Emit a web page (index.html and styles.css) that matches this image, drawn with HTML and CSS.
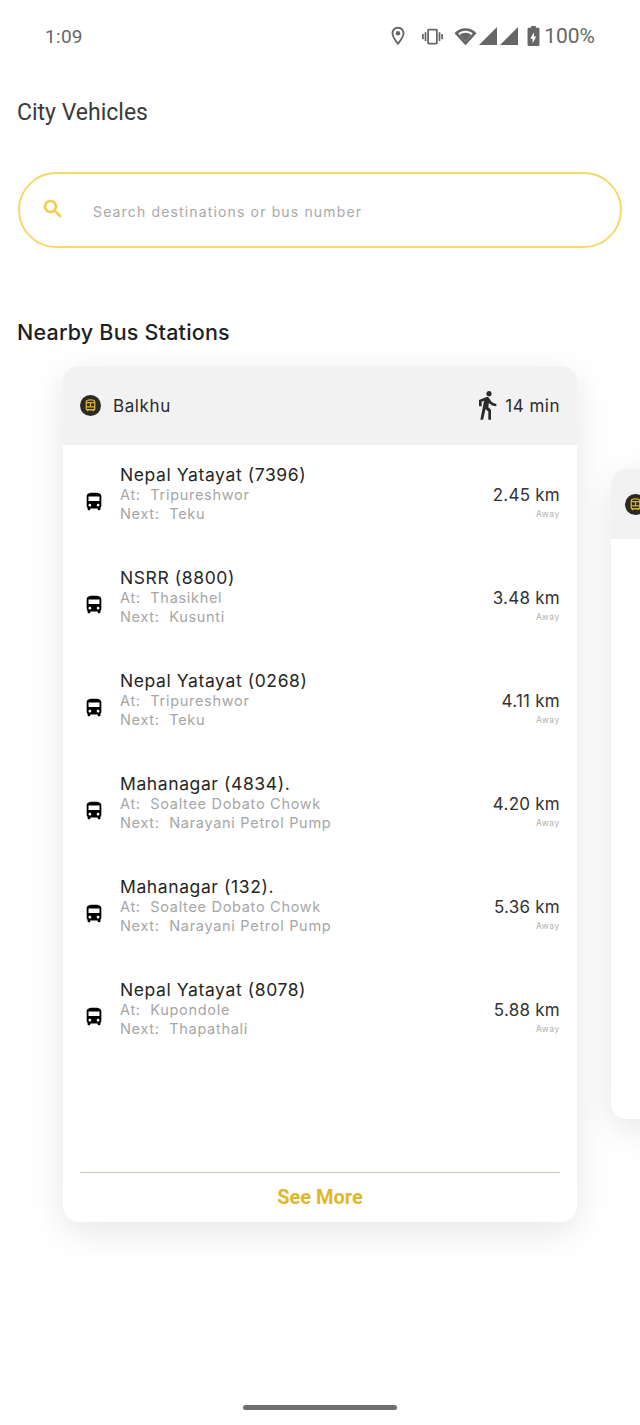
FILE: index.html
```html
<!DOCTYPE html>
<html lang="en">
<head>
<meta charset="utf-8">
<title>City Vehicles</title>
<link rel="stylesheet" href="styles.css">
</head>
<body>
<div class="page">
  <header class="status">
    <span class="time">1:09</span>
    <div class="status-icons">
      <svg class="si pin" viewBox="0 0 24 24"><path d="M12 2C8.100 2 5 5.100 5 9c0 5.200 7 13 7 13s7-7.800 7-13c0-3.900-3.100-7-7-7zm0 2c2.800 0 5 2.200 5 5 0 2.900-2.900 7.200-5 9.900C9.900 16.200 7 11.900 7 9c0-2.800 2.200-5 5-5z"/><circle cx="12" cy="9" r="2.500"/></svg>
      <svg class="si vib" viewBox="0 0 24 24"><path d="M0 15h2V9H0v6zm3 2h2V7H3v10zm19-8v6h2V9h-2zm-3 8h2V7h-2v10zM16.500 3h-9C6.700 3 6 3.700 6 4.500v15c0 .8.700 1.500 1.500 1.500h9c.8 0 1.500-.7 1.500-1.500v-15c0-.8-.7-1.500-1.500-1.500zM16 19H8V5h8v14z"/></svg>
      <svg class="si wifi" viewBox="0 0 24 24"><path fill-rule="evenodd" d="M12 21 .5 8.500C3.500 5.500 7.500 3.500 12 3.500s8.500 2 11.500 5L12 21zM12 17l7.500-8.200C17.500 7 15 6 12 6S6.500 7 4.500 8.800L12 17z"/><path d="M12 17 6 10.500C7.500 9 9.600 8.200 12 8.200s4.500.8 6 2.300L12 17z"/></svg>
      <svg class="si sig" viewBox="0 0 20 20"><path d="M1 19 19 1v18z"/></svg>
      <svg class="si sig" viewBox="0 0 20 20"><path d="M1 19 19 1v18z"/></svg>
      <svg class="si batt" viewBox="0 0 14 24"><path fill-rule="evenodd" d="M4.500 1h5v2H12c.8 0 1.500.7 1.500 1.500v17c0 .8-.7 1.500-1.500 1.500H2c-.8 0-1.500-.7-1.500-1.500v-17C.5 3.700 1.200 3 2 3h2.500V1zM6 20l4-7.500H7.500V8L3.500 15H6v5z"/></svg>
      <span class="pct">100%</span>
    </div>
  </header>

  <h1 class="title">City Vehicles</h1>

  <div class="search">
    <svg class="search-icon" viewBox="0 0 24 24"><path d="M15.500 14h-.8l-.3-.3c1-1.100 1.600-2.600 1.600-4.200C16 5.900 13.100 3 9.500 3S3 5.900 3 9.500 5.900 16 9.500 16c1.600 0 3.100-.6 4.200-1.600l.3.3v.8l5 5 1.500-1.500-5-5zm-6 0C7 14 5 12 5 9.500S7 5 9.500 5 14 7 14 9.500 12 14 9.500 14z"/></svg>
    <span class="placeholder">Search destinations or bus number</span>
  </div>

  <h2 class="section">Nearby Bus Stations</h2>

  <div class="carousel">
    <section class="card">
      <div class="card-head">
        <span class="badge"><svg viewBox="0 0 24 24"><path d="M6 7c0-2 2.500-3 6-3s6 1 6 3v10c0 .6-.4 1-1 1H7c-.6 0-1-.4-1-1V7zM6 8h12M6 14h12M12 8v6M8 18v2M16 18v2"/></svg></span>
        <span class="stop">Balkhu</span>
        <svg class="walk" viewBox="0 0 24 24"><path d="M13.500 5.500c1.100 0 2-.9 2-2s-.9-2-2-2-2 .9-2 2 .9 2 2 2zM9.800 8.900 7 23h2.100l1.800-8 2.100 2v6h2v-7.500l-2.100-2 .6-3C14.800 12 16.800 13 19 13v-2c-1.900 0-3.500-1-4.300-2.400l-1-1.600c-.4-.6-1-1-1.700-1-.3 0-.5.100-.8.100L6 8.300V13h2V9.600l1.800-.7"/></svg>
        <span class="mins">14 min</span>
      </div>
      <div class="rows">
        <article class="row">
          <svg class="bus" viewBox="0 0 24 24"><path d="M4 16c0 .9.400 1.700 1 2.200V20c0 .6.400 1 1 1h1c.6 0 1-.4 1-1v-1h8v1c0 .6.400 1 1 1h1c.6 0 1-.4 1-1v-1.800c.6-.5 1-1.300 1-2.200V6c0-3.500-3.600-4-8-4s-8 .5-8 4v10zm3.500 1c-.8 0-1.500-.7-1.500-1.500S6.700 14 7.500 14s1.500.7 1.500 1.500S8.300 17 7.500 17zm9 0c-.8 0-1.500-.7-1.500-1.500s.7-1.500 1.500-1.500 1.500.7 1.500 1.500-.7 1.500-1.500 1.500zM18 11H6V6h12v5z"/></svg>
          <div class="info">
            <div class="name">Nepal Yatayat (7396)</div>
            <div class="meta">At:&nbsp; Tripureshwor</div>
            <div class="meta">Next:&nbsp; Teku</div>
          </div>
          <div class="dist"><div class="km">2.45 km</div><div class="away">Away</div></div>
        </article>
        <article class="row">
          <svg class="bus" viewBox="0 0 24 24"><path d="M4 16c0 .9.400 1.700 1 2.200V20c0 .6.400 1 1 1h1c.6 0 1-.4 1-1v-1h8v1c0 .6.400 1 1 1h1c.6 0 1-.4 1-1v-1.800c.6-.5 1-1.300 1-2.200V6c0-3.500-3.600-4-8-4s-8 .5-8 4v10zm3.500 1c-.8 0-1.500-.7-1.500-1.500S6.700 14 7.500 14s1.500.7 1.500 1.500S8.300 17 7.500 17zm9 0c-.8 0-1.500-.7-1.500-1.500s.7-1.500 1.500-1.500 1.500.7 1.500 1.500-.7 1.500-1.500 1.500zM18 11H6V6h12v5z"/></svg>
          <div class="info">
            <div class="name">NSRR (8800)</div>
            <div class="meta">At:&nbsp; Thasikhel</div>
            <div class="meta">Next:&nbsp; Kusunti</div>
          </div>
          <div class="dist"><div class="km">3.48 km</div><div class="away">Away</div></div>
        </article>
        <article class="row">
          <svg class="bus" viewBox="0 0 24 24"><path d="M4 16c0 .9.400 1.700 1 2.200V20c0 .6.400 1 1 1h1c.6 0 1-.4 1-1v-1h8v1c0 .6.400 1 1 1h1c.6 0 1-.4 1-1v-1.800c.6-.5 1-1.300 1-2.200V6c0-3.500-3.600-4-8-4s-8 .5-8 4v10zm3.500 1c-.8 0-1.500-.7-1.500-1.500S6.700 14 7.500 14s1.500.7 1.500 1.500S8.300 17 7.500 17zm9 0c-.8 0-1.500-.7-1.500-1.500s.7-1.500 1.500-1.500 1.500.7 1.500 1.500-.7 1.500-1.500 1.500zM18 11H6V6h12v5z"/></svg>
          <div class="info">
            <div class="name">Nepal Yatayat (0268)</div>
            <div class="meta">At:&nbsp; Tripureshwor</div>
            <div class="meta">Next:&nbsp; Teku</div>
          </div>
          <div class="dist"><div class="km">4.11 km</div><div class="away">Away</div></div>
        </article>
        <article class="row">
          <svg class="bus" viewBox="0 0 24 24"><path d="M4 16c0 .9.400 1.700 1 2.200V20c0 .6.400 1 1 1h1c.6 0 1-.4 1-1v-1h8v1c0 .6.400 1 1 1h1c.6 0 1-.4 1-1v-1.800c.6-.5 1-1.300 1-2.200V6c0-3.500-3.600-4-8-4s-8 .5-8 4v10zm3.500 1c-.8 0-1.500-.7-1.500-1.500S6.700 14 7.500 14s1.500.7 1.500 1.500S8.300 17 7.500 17zm9 0c-.8 0-1.500-.7-1.500-1.500s.7-1.500 1.500-1.500 1.500.7 1.500 1.500-.7 1.500-1.500 1.500zM18 11H6V6h12v5z"/></svg>
          <div class="info">
            <div class="name">Mahanagar (4834).</div>
            <div class="meta">At:&nbsp; Soaltee Dobato Chowk</div>
            <div class="meta">Next:&nbsp; Narayani Petrol Pump</div>
          </div>
          <div class="dist"><div class="km">4.20 km</div><div class="away">Away</div></div>
        </article>
        <article class="row">
          <svg class="bus" viewBox="0 0 24 24"><path d="M4 16c0 .9.400 1.700 1 2.200V20c0 .6.400 1 1 1h1c.6 0 1-.4 1-1v-1h8v1c0 .6.400 1 1 1h1c.6 0 1-.4 1-1v-1.800c.6-.5 1-1.300 1-2.200V6c0-3.500-3.600-4-8-4s-8 .5-8 4v10zm3.500 1c-.8 0-1.500-.7-1.500-1.500S6.700 14 7.500 14s1.500.7 1.500 1.500S8.300 17 7.500 17zm9 0c-.8 0-1.500-.7-1.500-1.500s.7-1.500 1.500-1.500 1.500.7 1.500 1.500-.7 1.500-1.500 1.500zM18 11H6V6h12v5z"/></svg>
          <div class="info">
            <div class="name">Mahanagar (132).</div>
            <div class="meta">At:&nbsp; Soaltee Dobato Chowk</div>
            <div class="meta">Next:&nbsp; Narayani Petrol Pump</div>
          </div>
          <div class="dist"><div class="km">5.36 km</div><div class="away">Away</div></div>
        </article>
        <article class="row">
          <svg class="bus" viewBox="0 0 24 24"><path d="M4 16c0 .9.400 1.700 1 2.200V20c0 .6.400 1 1 1h1c.6 0 1-.4 1-1v-1h8v1c0 .6.400 1 1 1h1c.6 0 1-.4 1-1v-1.800c.6-.5 1-1.300 1-2.200V6c0-3.500-3.600-4-8-4s-8 .5-8 4v10zm3.500 1c-.8 0-1.500-.7-1.500-1.500S6.700 14 7.500 14s1.500.7 1.500 1.500S8.300 17 7.500 17zm9 0c-.8 0-1.500-.7-1.500-1.500s.7-1.500 1.500-1.500 1.500.7 1.500 1.500-.7 1.500-1.500 1.500zM18 11H6V6h12v5z"/></svg>
          <div class="info">
            <div class="name">Nepal Yatayat (8078)</div>
            <div class="meta">At:&nbsp; Kupondole</div>
            <div class="meta">Next:&nbsp; Thapathali</div>
          </div>
          <div class="dist"><div class="km">5.88 km</div><div class="away">Away</div></div>
        </article>
      </div>
      <footer class="more"><span>See More</span></footer>
    </section>
    <section class="card card-next">
      <div class="card-head head-next">
        <span class="badge"><svg viewBox="0 0 24 24"><path d="M6 7c0-2 2.500-3 6-3s6 1 6 3v10c0 .6-.4 1-1 1H7c-.6 0-1-.4-1-1V7zM6 8h12M6 14h12M12 8v6M8 18v2M16 18v2"/></svg></span>
      </div>
    </section>
  </div>

  <div class="home"><span class="home-bar"></span></div>
</div>
</body>
</html>
```

FILE: styles.css
```css
* { box-sizing: border-box; }
html, body { margin: 0; padding: 0; background: #fff; }
.page {
  width: 640px;
  height: 1425px;
  overflow: hidden;
  display: flex;
  flex-direction: column;
  font-family: "Inter", "Lato", sans-serif;
  color: #212121;
}
.status {
  height: 72px;
  padding: 0 45px;
  display: flex;
  align-items: center;
  justify-content: space-between;
  color: #666;
  font-family: Roboto, sans-serif;
}
.time { font-size: 19px; letter-spacing: .3px; }
.status-icons { display: flex; align-items: center; }
.si { fill: #666; display: block; }
.pin { width: 22px; height: 22px; margin-right: 12px; }
.vib { width: 23px; height: 21px; margin-right: 10px; }
.wifi { width: 23px; height: 23px; }
.sig { width: 20px; height: 20px; margin-left: 1px; }
.batt { width: 13px; height: 22px; margin-left: 8px; margin-right: 4px; }
.pct { font-size: 21px; }
.title {
  margin: 27px 0 0 17px;
  font-family: Roboto, sans-serif;
  font-size: 23px;
  line-height: 28px;
  font-weight: 400;
  color: #3a3a3a;
}
.search {
  margin: 45px 18px 0;
  height: 76px;
  border: 2px solid #f5d869;
  border-radius: 38px;
  display: flex;
  align-items: center;
  padding-left: 21px;
}
.search-icon { width: 24px; height: 24px; fill: #f4c93c; stroke: #f4c93c; stroke-width: .5; margin-top: -2px; }
.placeholder {
  margin: 2px 0 0 28px;
  font-size: 14px;
  color: #a8a8a8;
  letter-spacing: 1.15px;
}
.section {
  margin: 70px 0 0 17px;
  font-size: 21.5px;
  line-height: 28px;
  font-weight: 500;
  color: #1f1f1f;
  letter-spacing: .2px;
}
.carousel {
  margin-top: 20px;
  height: 856px;
  display: flex;
  align-items: center;
  padding-left: 63px;
  gap: 34px;
}
.card {
  flex: 0 0 514px;
  height: 856px;
  border-radius: 16px;
  background: #fff;
  box-shadow: 0 10px 36px rgba(0,0,0,.1);
  display: flex;
  flex-direction: column;
  overflow: hidden;
}
.card-next { height: 650px; }
.card-head {
  height: 79px;
  flex: none;
  background: #f2f2f2;
  display: flex;
  align-items: center;
  padding: 0 17px;
}
.head-next { height: 70px; padding-left: 14px; }
.badge {
  width: 21px;
  height: 21px;
  border-radius: 50%;
  background: #2a2a22;
  display: flex;
  align-items: center;
  justify-content: center;
}
.badge svg { width: 17px; height: 17px; fill: none; stroke: #dcb32c; stroke-width: 1.8; }
.stop { margin-left: 12px; font-size: 17px; flex: 1; letter-spacing: .6px; color: #2b2b2b; }
.walk { width: 32px; height: 32px; fill: #2b2b2b; margin: -2px 2px 0 0; }
.mins { font-size: 17px; letter-spacing: .5px; color: #2b2b2b; }
.rows { flex: 1; }
.row {
  height: 103px;
  padding: 0 17px 6px;
  display: flex;
  align-items: center;
}
.bus { width: 22px; height: 22px; fill: #000; flex: none; margin: 17px 0 0 3px; }
.info { flex: 1; margin-left: 15px; margin-top: -1px; }
.name { font-size: 17.5px; line-height: 21px; letter-spacing: .6px; color: #262626; }
.meta { font-size: 14.5px; line-height: 19px; color: #a6a6a6; letter-spacing: .7px; }
.dist { text-align: right; margin-top: 17px; }
.km { font-size: 17px; line-height: 22px; color: #333; letter-spacing: .25px; }
.away { font-size: 8.5px; line-height: 12px; color: #b0b0b0; letter-spacing: .6px; margin-top: 2px; }
.more {
  margin: 0 17px;
  height: 50px;
  padding-bottom: 2px;
  flex: none;
  border-top: 1px solid #c9c7ac;
  display: flex;
  align-items: center;
  justify-content: center;
  font-family: Roboto, sans-serif;
  font-size: 20px;
  font-weight: 700;
  color: #dfb72d;
}
.home {
  margin-top: auto;
  height: 34px;
  display: flex;
  justify-content: center;
  padding-top: 14px;
}
.home-bar { width: 154px; height: 5px; border-radius: 3px; background: #6f6f6f; }
```
